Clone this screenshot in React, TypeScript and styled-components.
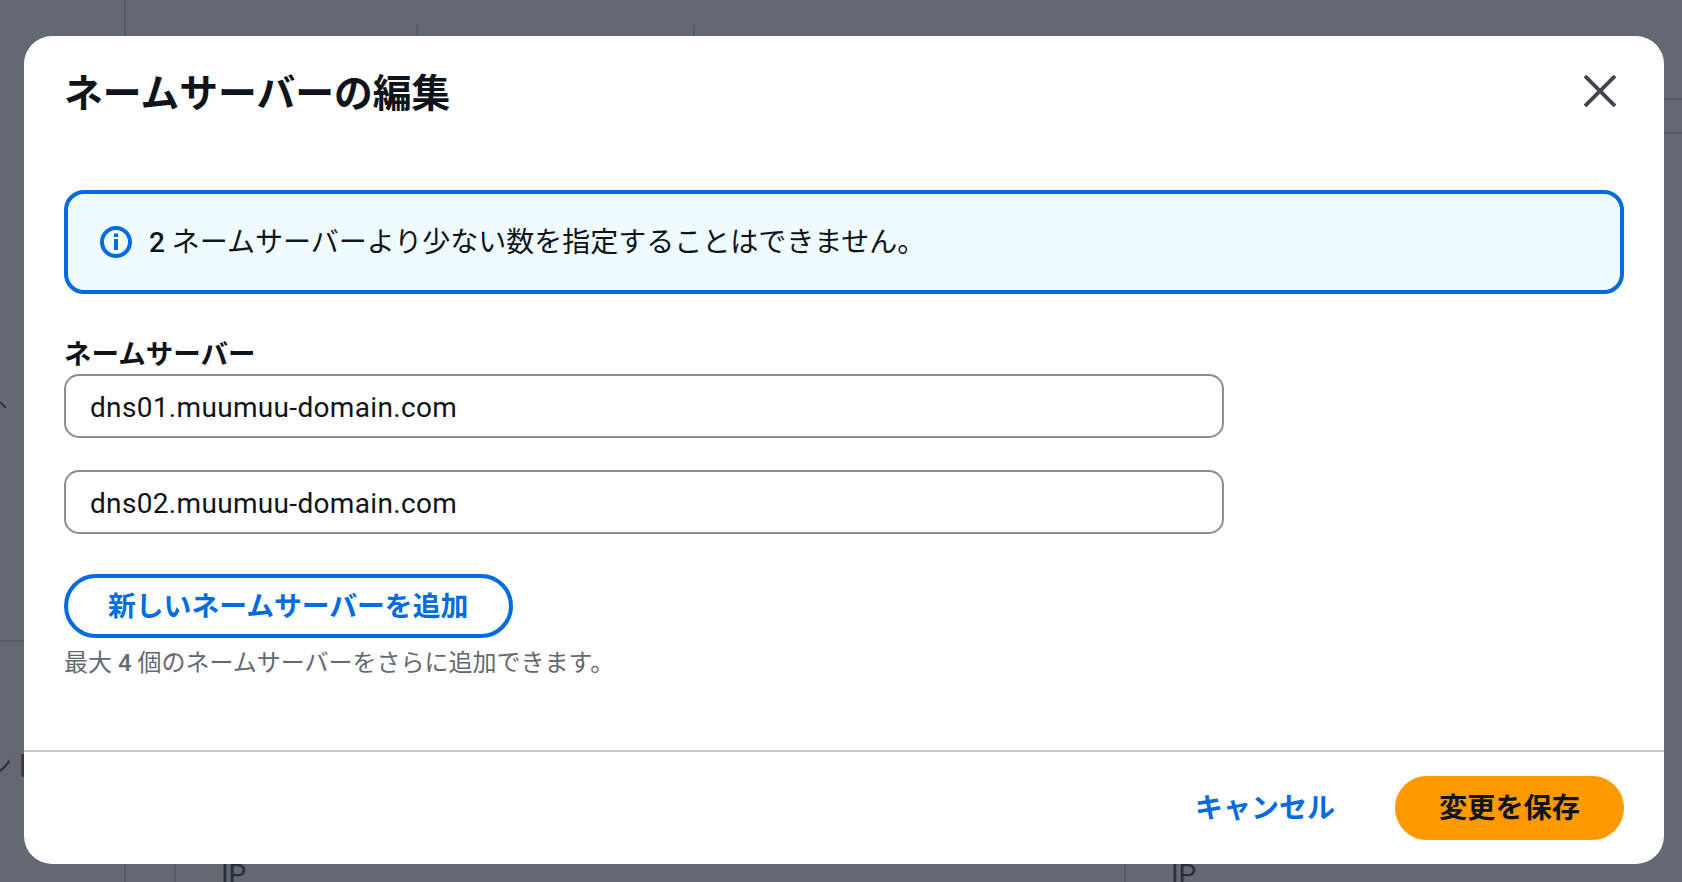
import React from "react";
import styled, { createGlobalStyle } from "styled-components";

const FONT = `Roboto, "Noto Sans CJK JP", sans-serif`;

const Global = createGlobalStyle`
  html, body { margin: 0; padding: 0; height: 100%; overflow: hidden; background: #646872; }
  body { font-family: ${FONT}; }
  * { box-sizing: border-box; }
`;

const Page = styled.div`
  display: grid;
  grid-template-columns: 24px 1640px 18px;
  grid-template-rows: 36px 828px 18px;
  width: 1682px;
  height: 882px;
  overflow: hidden;
  background: #646872;
`;

const TopStrip = styled.div`
  grid-column: 1 / 4;
  display: flex;
  align-items: flex-end;
  padding-left: 124px;
`;

const TopCell = styled.div<{ $w: number; $h: number }>`
  width: ${(p) => p.$w}px;
  height: ${(p) => p.$h}px;
  border-left: 2px solid #595c67;
`;

const LeftGutter = styled.div`
  display: flex;
  flex-direction: column;
  overflow: hidden;
`;

const Chevron = styled.svg`
  display: block;
  width: 8px;
  height: 8px;
  margin-top: 364px;
`;

const GutterRule = styled.div`
  height: 2px;
  margin-top: 232px;
  background: #595c67;
`;

const GutterText = styled.div`
  margin-top: 107px;
  margin-left: -16px;
  width: 60px;
  font-size: 28px;
  line-height: 36px;
  color: #2f343f;
  white-space: nowrap;
`;

const RightGutter = styled.div`
  display: flex;
  flex-direction: column;
  padding-top: 62px;
  gap: 32px;
`;

const RightRule = styled.div`
  height: 2px;
  background: #595c67;
`;

const BottomStrip = styled.div`
  grid-column: 1 / 4;
  display: flex;
  padding-left: 124px;
  overflow: hidden;
`;

const BottomCell = styled.div<{ $w: number }>`
  width: ${(p) => p.$w}px;
  height: 18px;
  border-left: 2px solid #565964;
`;

const BottomText = styled.div<{ $w: number }>`
  width: ${(p) => p.$w}px;
  height: 18px;
  padding-left: 45px;
  font-size: 28px;
  line-height: 22px;
  color: #2a2f3b;
  border-left: 2px solid #565964;
`;

const Dialog = styled.div`
  display: flex;
  flex-direction: column;
  background: #ffffff;
  border-radius: 28px;
  overflow: hidden;
`;

const Header = styled.div`
  display: flex;
  justify-content: space-between;
  align-items: flex-start;
  height: 154px;
  padding: 36px 48px 0 40px;
`;

const Title = styled.h2`
  margin: 0;
  font-size: 38.8px;
  line-height: 44px;
  font-weight: 700;
  color: #0f141a;
`;

const CloseButton = styled.button`
  display: flex;
  width: 32px;
  height: 32px;
  margin-top: 3px;
  padding: 0;
  border: none;
  background: none;
  color: #424650;
`;

const Body = styled.div`
  display: flex;
  flex-direction: column;
  align-items: flex-start;
  flex: 1;
  padding: 0 40px;
`;

const Alert = styled.div`
  display: flex;
  align-items: center;
  gap: 17px;
  width: 100%;
  height: 104px;
  padding-left: 32px;
  background: #f0fbff;
  border: 4px solid #006ce0;
  border-radius: 20px;
  font-size: 28px;
  line-height: 36px;
  color: #0f141a;
`;

const AlertText = styled.span`
  padding-top: 2px;
`;

const Num = styled.span`
  font-weight: 500;
`;

const Label = styled.label`
  display: block;
  margin-top: 43px;
  margin-bottom: 1px;
  font-size: 27.5px;
  line-height: 36px;
  font-weight: 700;
  color: #0f141a;
`;

const Input = styled.input<{ $gapTop?: number }>`
  display: block;
  width: 1160px;
  height: 64px;
  margin-top: ${(p) => p.$gapTop ?? 0}px;
  padding: 2px 24px 0;
  background: #ffffff;
  border: 2px solid #8c8c94;
  border-radius: 15px;
  font-family: ${FONT};
  font-size: 28px;
  letter-spacing: 0.33px;
  color: #0f141a;
  outline: none;
`;

const Pill = styled.button<{ $primary?: boolean }>`
  height: 64px;
  padding: 0 40px 5px;
  border-radius: 32px;
  border: 4px solid ${(p) => (p.$primary ? "#ff9900" : "#006ce0")};
  background: ${(p) => (p.$primary ? "#ff9900" : "#ffffff")};
  color: ${(p) => (p.$primary ? "#0f141a" : "#006ce0")};
  font-family: ${FONT};
  font-size: 28.2px;
  font-weight: 700;
  white-space: nowrap;
`;

const AddPill = styled(Pill)`
  margin-top: 40px;
  padding: 0 41px 5px 40px;
  font-size: 27.8px;
`;

const Hint = styled.div`
  margin-top: 8px;
  font-size: 24px;
  line-height: 34px;
  color: #656871;
`;

const Footer = styled.div`
  display: flex;
  justify-content: flex-end;
  align-items: center;
  gap: 60px;
  height: 114px;
  padding: 0 40px 1px 0;
  border-top: 2px solid #c6c6cd;
`;

const TextButton = styled.button`
  padding: 0 0 3px;
  border: none;
  background: none;
  color: #006ce0;
  font-family: ${FONT};
  font-size: 28px;
  font-weight: 700;
`;

export default function App() {
  return (
    <>
      <Global />
      <Page>
        <TopStrip>
          <TopCell $w={292} $h={36} />
          <TopCell $w={277} $h={12} />
          <TopCell $w={100} $h={12} />
        </TopStrip>
        <LeftGutter>
          <Chevron viewBox="0 0 8 8">
            <path d="M0 2 L6 8" stroke="#2f343f" strokeWidth="2" fill="none" />
          </Chevron>
          <GutterRule />
          <GutterText>ント</GutterText>
        </LeftGutter>
        <Dialog>
          <Header>
            <Title>ネームサーバーの編集</Title>
            <CloseButton aria-label="閉じる">
              <svg width="32" height="32" viewBox="0 0 32 32" fill="none">
                <path d="M1 1 L31 31 M31 1 L1 31" stroke="currentColor" strokeWidth="3.8" />
              </svg>
            </CloseButton>
          </Header>
          <Body>
            <Alert>
              <svg width="32" height="32" viewBox="0 0 32 32" fill="none">
                <circle cx="16" cy="16" r="14" stroke="#006ce0" strokeWidth="4" />
                <path d="M16 13 V24" stroke="#006ce0" strokeWidth="4" />
                <path d="M16 7.5 V11" stroke="#006ce0" strokeWidth="4" />
              </svg>
              <AlertText>
                <Num>2</Num> ネームサーバーより少ない数を指定することはできません。
              </AlertText>
            </Alert>
            <Label>ネームサーバー</Label>
            <Input readOnly value="dns01.muumuu-domain.com" />
            <Input readOnly value="dns02.muumuu-domain.com" $gapTop={32} />
            <AddPill>新しいネームサーバーを追加</AddPill>
            <Hint>
              最大 <Num>4</Num> 個のネームサーバーをさらに追加できます。
            </Hint>
          </Body>
          <Footer>
            <TextButton>キャンセル</TextButton>
            <Pill $primary>変更を保存</Pill>
          </Footer>
        </Dialog>
        <RightGutter>
          <RightRule />
          <RightRule />
        </RightGutter>
        <BottomStrip>
          <BottomCell $w={50} />
          <BottomText $w={950}>IP</BottomText>
          <BottomText $w={200}>IP</BottomText>
        </BottomStrip>
      </Page>
    </>
  );
}
